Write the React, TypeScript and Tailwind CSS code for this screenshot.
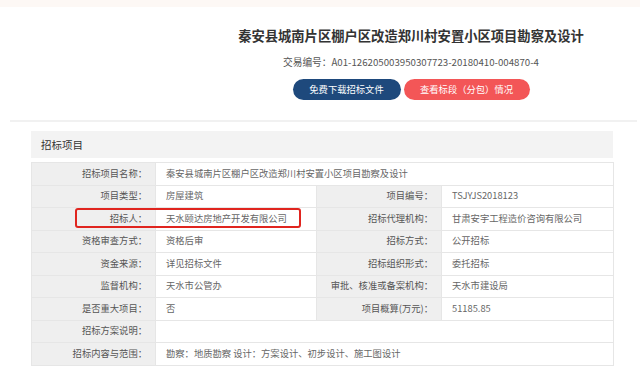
import React from 'react';

const font = { fontFamily: '"Noto Sans CJK SC", "Noto Sans", sans-serif' };

type Row =
  | { kind: 'full'; label: string; value: string }
  | { kind: 'pair'; label: string; value: string; label2: string; value2: string };

const rows: Row[] = [
  { kind: 'full', label: '招标项目名称：', value: '秦安县城南片区棚户区改造郑川村安置小区项目勘察及设计' },
  { kind: 'pair', label: '项目类型：', value: '房屋建筑', label2: '项目编号：', value2: 'TSJYJS2018123' },
  { kind: 'pair', label: '招标人：', value: '天水颐达房地产开发有限公司', label2: '招标代理机构：', value2: '甘肃安宇工程造价咨询有限公司' },
  { kind: 'pair', label: '资格审查方式：', value: '资格后审', label2: '招标方式：', value2: '公开招标' },
  { kind: 'pair', label: '资金来源：', value: '详见招标文件', label2: '招标组织形式：', value2: '委托招标' },
  { kind: 'pair', label: '监督机构：', value: '天水市公管办', label2: '审批、核准或备案机构：', value2: '天水市建设局' },
  { kind: 'pair', label: '是否重大项目：', value: '否', label2: '项目概算(万元)：', value2: '51185.85' },
  { kind: 'full', label: '招标方案说明：', value: '' },
  { kind: 'full', label: '招标内容与范围：', value: '勘察：地质勘察 设计：方案设计、初步设计、施工图设计' },
];

const labelCls = 'bg-[#efefef] text-right pr-[8px] text-[#555] whitespace-nowrap border border-[#e6e6e6]';
const valueCls = 'bg-white text-left pl-[10px] text-[#666] whitespace-nowrap border border-[#e6e6e6]';

export default function App() {
  return (
    <div className="w-[640px] h-[376px] bg-white overflow-hidden" style={font}>
      {/* top strip */}
      <div className="h-[7px] bg-[#fdf8f5]" />

      {/* header */}
      <div className="flex flex-col items-center pl-[182px] pt-[20px]">
        <h1 className="text-[13.3px] leading-[18px] font-bold text-[#333] whitespace-nowrap">
          秦安县城南片区棚户区改造郑川村安置小区项目勘察及设计
        </h1>
        <div className="mt-[11px] text-[9.7px] leading-[12px] text-[#555] whitespace-nowrap">
          交易编号：A01-126205003950307723-20180410-004870-4
        </div>
        <div className="mt-[11px] flex gap-[3px]">
          <button className="h-[21px] w-[108px] rounded-full bg-[#1e497c] text-white text-[9.3px]">
            免费下载招标文件
          </button>
          <button className="h-[21px] w-[126px] rounded-full bg-[#f35657] text-white text-[9.3px]">
            查看标段（分包）情况
          </button>
        </div>
      </div>

      <div className="mt-[20px] ml-[10px] mr-[3px] h-[2px] bg-[#f1f1f1]" />

      {/* panel */}
      <div className="ml-[31px] w-[582px] mt-[9px]">
        <div className="h-[27px] bg-[#f3f3f3] flex items-center pl-[10px] text-[10.5px] text-[#333]">
          招标项目
        </div>
        <div className="relative mt-[4px]">
          <table className="w-[582px] table-fixed border-collapse text-[9.3px]">
            <colgroup>
              <col className="w-[124px]" />
              <col className="w-[161px]" />
              <col className="w-[125px]" />
              <col className="w-[172px]" />
            </colgroup>
            <tbody>
              {rows.map((r, i) => (
                <tr key={i} className="h-[22.5px]">
                  <td className={labelCls}>{r.label}</td>
                  {r.kind === 'full' ? (
                    <td className={valueCls} colSpan={3}>{r.value}</td>
                  ) : (
                    <>
                      <td className={valueCls}>{r.value}</td>
                      <td className={labelCls}>{r.label2}</td>
                      <td className={valueCls}>{r.value2}</td>
                    </>
                  )}
                </tr>
              ))}
            </tbody>
          </table>
          {/* highlight */}
          <div className="absolute left-[44px] top-[46px] w-[226px] h-[20px] border-2 border-[#e0251f] rounded-[3px]" />
        </div>
      </div>
    </div>
  );
}
